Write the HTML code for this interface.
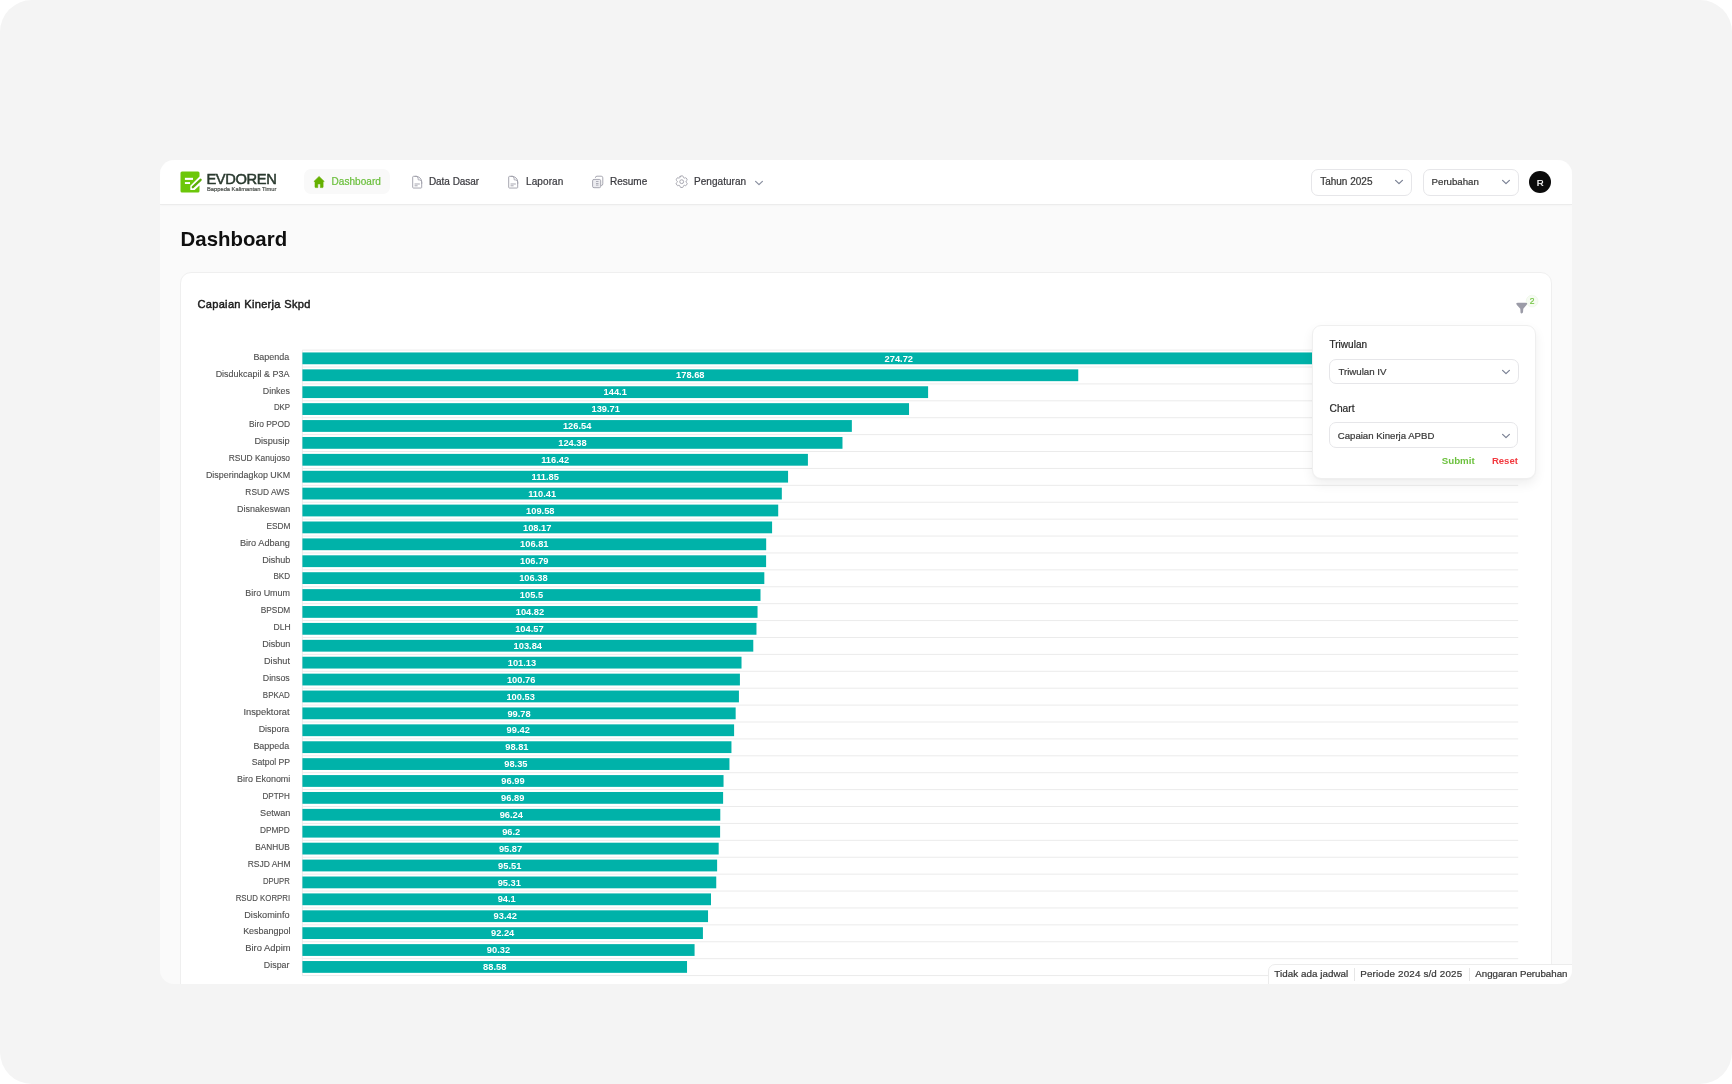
<!DOCTYPE html>
<html><head><meta charset="utf-8"><style>
html,body{margin:0;padding:0;width:1732px;height:1084px;overflow:hidden;background:#fff;font-family:"Liberation Sans", sans-serif;}
.abs{position:absolute;}
.t{position:absolute;white-space:nowrap;line-height:normal;}
.m{-webkit-text-stroke:0.22px currentColor;}
.l{-webkit-text-stroke:0.12px currentColor;}
.s{-webkit-text-stroke:0.45px currentColor;}
#inner{will-change:transform;}
.sel{position:absolute;box-sizing:border-box;border:1px solid #e6e6e9;border-radius:7px;background:#fff;}
#outer{position:absolute;left:0;top:0;width:1732px;height:1084px;background:#f4f4f4;border-radius:32px;}
#win{position:absolute;left:160px;top:160px;width:1412px;height:824px;background:#fafafa;border-radius:14px;overflow:hidden;}
#inner{position:absolute;left:-160px;top:-160px;width:1732px;height:1084px;}
</style></head><body>
<div id="outer"></div>
<div id="win"><div id="inner">
<div class="abs" style="left:160px;top:160px;width:1412px;height:44px;background:#fff;border-bottom:1px solid #ececec;box-shadow:0 1px 2px rgba(0,0,0,0.025)"></div>
<div class="abs" style="left:304px;top:169.3px;width:86px;height:25px;border-radius:7px;background:#f9f9f9"></div>
<svg class="abs" style="left:0;top:0" width="1732" height="300" viewBox="0 0 1732 300">
<path d="M180.5 172.9 Q180.5 171.4 182 171.4 L198 171.4 Q199.5 171.4 199.5 172.9 L199.5 176.6 L190.3 185.7 L190.3 190.1 L194.6 190.1 L199.5 185.4 L199.5 190.9 Q199.5 192.4 198 192.4 L182 192.4 Q180.5 192.4 180.5 190.9 Z" fill="#6cc70a"/>
<rect x="184.9" y="177.8" width="8.1" height="2.1" fill="#fff"/>
<rect x="184.9" y="182.1" width="5.1" height="1.9" fill="#fff"/>
<path d="M192.8 187.2 L200.6 179.8" stroke="#5aae06" stroke-width="2.3" stroke-linecap="round"/>
<path d="M313.9 181.5 L319.07 176.4 L324.25 181.5 L323.1 181.5 L323.1 187.0 Q323.1 187.6 322.5 187.6 L320.35 187.6 L320.35 183.9 L317.8 183.9 L317.8 187.6 L315.6 187.6 Q315.0 187.6 315.0 187.0 L315.0 181.5 Z" fill="#64b000" stroke="#64b000" stroke-width="0.6" stroke-linejoin="round"/>
</svg>
<div class="t " style="left:206.40px;top:171.30px;font-size:14.7px;color:#2a3a2f;font-weight:400;letter-spacing:-0.35px;-webkit-text-stroke:0.5px currentColor;">EVDOREN</div>
<div class="t " style="left:207.00px;top:185.70px;font-size:5.75px;color:#4a4f4b;font-weight:400;-webkit-text-stroke:0.2px currentColor;">Bappeda Kalimantan Timur</div>
<div class="t m" style="left:331.50px;top:175.95px;font-size:10px;color:#6abf3b;font-weight:400;letter-spacing:0.06px">Dashboard</div>
<svg class="abs" style="left:409.90px;top:174.6px" width="14.4" height="14.4" viewBox="0 0 24 24"><path fill="none" stroke="#a3a3ad" stroke-width="1.6" stroke-linecap="round" stroke-linejoin="round" d="M19.5 14.25v-2.625a3.375 3.375 0 0 0-3.375-3.375h-1.5A1.125 1.125 0 0 1 13.5 7.125v-1.5a3.375 3.375 0 0 0-3.375-3.375H8.25m0 12.75h7.5m-7.5 3H12M10.5 2.25H5.625c-.621 0-1.125.504-1.125 1.125v17.250c0 .621.504 1.125 1.125 1.125h12.75c.621 0 1.125-.504 1.125-1.125V11.25a9 9 0 0 0-9-9Z"/></svg>
<div class="t m" style="left:428.90px;top:175.95px;font-size:10px;color:#3b3b40;font-weight:400;letter-spacing:-0.03px">Data Dasar</div>
<svg class="abs" style="left:505.90px;top:174.6px" width="14.4" height="14.4" viewBox="0 0 24 24"><path fill="none" stroke="#a3a3ad" stroke-width="1.6" stroke-linecap="round" stroke-linejoin="round" d="M19.5 14.25v-2.625a3.375 3.375 0 0 0-3.375-3.375h-1.5A1.125 1.125 0 0 1 13.5 7.125v-1.5a3.375 3.375 0 0 0-3.375-3.375H8.25m0 12.75h7.5m-7.5 3H12M10.5 2.25H5.625c-.621 0-1.125.504-1.125 1.125v17.250c0 .621.504 1.125 1.125 1.125h12.75c.621 0 1.125-.504 1.125-1.125V11.25a9 9 0 0 0-9-9Z"/></svg>
<div class="t m" style="left:526.00px;top:175.95px;font-size:10px;color:#3b3b40;font-weight:400;letter-spacing:0.1px">Laporan</div>
<svg class="abs" style="left:590px;top:174px" width="16" height="16" viewBox="0 0 16 16"><path d="M5.4 3.8 Q5.4 2.2 7 2.2 L11.2 2.2 Q12.8 2.2 12.8 3.8 L12.8 9.9 Q12.8 11.5 11.2 11.5 L10.7 11.5" fill="none" stroke="#a7a7b1" stroke-width="1"/><rect x="2.6" y="5.4" width="8.1" height="8.3" rx="1.4" fill="#ececf0" stroke="#a7a7b1" stroke-width="1"/><path d="M6 7.5 H8.5 M6 9.5 H8.5 M6 11.1 H8.5" stroke="#a7a7b1" stroke-width="0.9"/></svg>
<div class="t m" style="left:610.00px;top:175.95px;font-size:10px;color:#3b3b40;font-weight:400;">Resume</div>
<svg class="abs" style="left:674.3px;top:174.3px" width="15.4" height="15.4" viewBox="0 0 24 24"><path fill="none" stroke="#a3a3ad" stroke-width="1.5" stroke-linecap="round" stroke-linejoin="round" d="M9.594 3.94c.09-.542.56-.94 1.11-.94h2.593c.55 0 1.02.398 1.11.94l.213 1.281c.063.374.313.686.645.87.074.04.147.083.22.127.325.196.72.257 1.075.124l1.217-.456a1.125 1.125 0 0 1 1.37.49l1.296 2.247a1.125 1.125 0 0 1-.26 1.431l-1.003.827c-.293.241-.438.613-.43.992a7.723 7.723 0 0 1 0 .255c-.008.378.137.75.43.991l1.004.827c.424.35.534.955.26 1.43l-1.298 2.247a1.125 1.125 0 0 1-1.369.491l-1.217-.456c-.355-.133-.75-.072-1.076.124a6.47 6.47 0 0 1-.22.128c-.331.183-.581.495-.644.869l-.213 1.281c-.09.543-.56.94-1.110.94h-2.594c-.55 0-1.019-.398-1.11-.94l-.213-1.281c-.062-.374-.312-.686-.644-.87a6.52 6.52 0 0 1-.22-.127c-.325-.196-.72-.257-1.076-.124l-1.217.456a1.125 1.125 0 0 1-1.369-.49l-1.297-2.247a1.125 1.125 0 0 1 .26-1.431l1.004-.827c.292-.24.437-.613.43-.991a6.932 6.932 0 0 1 0-.255c.007-.38-.138-.751-.43-.992l-1.004-.827a1.125 1.125 0 0 1-.26-1.430l1.297-2.247a1.125 1.125 0 0 1 1.37-.491l1.216.456c.356.133.751.072 1.076-.124.072-.044.146-.086.22-.128.332-.183.582-.495.644-.869l.214-1.28Z"/><path fill="none" stroke="#a3a3ad" stroke-width="1.5" d="M15 12a3 3 0 1 1-6 0 3 3 0 0 1 6 0Z"/></svg>
<div class="t m" style="left:694.00px;top:175.95px;font-size:10px;color:#3b3b40;font-weight:400;letter-spacing:0.05px">Pengaturan</div>
<svg class="abs" style="left:753.8px;top:179.5px" width="10" height="6" viewBox="0 0 10 6"><path d="M1.6 1.4 L5 4.6 L8.4 1.4" fill="none" stroke="#8a90a0" stroke-width="1.25" stroke-linecap="round" stroke-linejoin="round"/></svg>
<div class="sel" style="left:1311.4px;top:169.3px;width:101px;height:26.4px"></div>
<div class="t m" style="left:1320.20px;top:175.95px;font-size:10.0px;color:#383838;font-weight:400;">Tahun 2025</div>
<svg class="abs" style="left:1394.4px;top:179.2px" width="10" height="6" viewBox="0 0 10 6"><path d="M1.6 1.4 L5 4.6 L8.4 1.4" fill="none" stroke="#7a8194" stroke-width="1.25" stroke-linecap="round" stroke-linejoin="round"/></svg>
<div class="sel" style="left:1422.6px;top:169.2px;width:96px;height:26.4px"></div>
<div class="t m" style="left:1431.60px;top:176.25px;font-size:9.67px;color:#383838;font-weight:400;">Perubahan</div>
<svg class="abs" style="left:1500.5px;top:179.2px" width="10" height="6" viewBox="0 0 10 6"><path d="M1.6 1.4 L5 4.6 L8.4 1.4" fill="none" stroke="#7a8194" stroke-width="1.25" stroke-linecap="round" stroke-linejoin="round"/></svg>
<div class="abs" style="left:1529.1px;top:170.9px;width:22px;height:22px;border-radius:50%;background:#0b0b0b"></div>
<div class="t m" style="left:1040.30px;width:1000px;text-align:center;top:177.12px;font-size:9.7px;color:#fff;font-weight:400;">R</div>
<div class="t " style="left:180.60px;top:227.74px;font-size:20.4px;color:#0f0f0f;font-weight:700;">Dashboard</div>
<div class="abs" style="left:180px;top:272px;width:1372px;height:800px;background:#fff;border:1px solid #efefef;border-radius:11px;box-sizing:border-box"></div>
<div class="t s" style="left:197.40px;top:297.55px;font-size:11.1px;color:#1c1c1c;font-weight:400;letter-spacing:0.3px">Capaian Kinerja Skpd</div>
<svg class="abs" width="1732" height="1084" viewBox="0 0 1732 1084" style="left:0;top:0"><rect x="302.40" y="349.60" width="1215.80" height="1" fill="#ebebeb"/><rect x="302.40" y="366.50" width="1215.80" height="1" fill="#ebebeb"/><rect x="302.40" y="383.41" width="1215.80" height="1" fill="#ebebeb"/><rect x="302.40" y="400.32" width="1215.80" height="1" fill="#ebebeb"/><rect x="302.40" y="417.22" width="1215.80" height="1" fill="#ebebeb"/><rect x="302.40" y="434.12" width="1215.80" height="1" fill="#ebebeb"/><rect x="302.40" y="451.03" width="1215.80" height="1" fill="#ebebeb"/><rect x="302.40" y="467.94" width="1215.80" height="1" fill="#ebebeb"/><rect x="302.40" y="484.84" width="1215.80" height="1" fill="#ebebeb"/><rect x="302.40" y="501.75" width="1215.80" height="1" fill="#ebebeb"/><rect x="302.40" y="518.65" width="1215.80" height="1" fill="#ebebeb"/><rect x="302.40" y="535.56" width="1215.80" height="1" fill="#ebebeb"/><rect x="302.40" y="552.46" width="1215.80" height="1" fill="#ebebeb"/><rect x="302.40" y="569.37" width="1215.80" height="1" fill="#ebebeb"/><rect x="302.40" y="586.27" width="1215.80" height="1" fill="#ebebeb"/><rect x="302.40" y="603.18" width="1215.80" height="1" fill="#ebebeb"/><rect x="302.40" y="620.08" width="1215.80" height="1" fill="#ebebeb"/><rect x="302.40" y="636.99" width="1215.80" height="1" fill="#ebebeb"/><rect x="302.40" y="653.89" width="1215.80" height="1" fill="#ebebeb"/><rect x="302.40" y="670.80" width="1215.80" height="1" fill="#ebebeb"/><rect x="302.40" y="687.70" width="1215.80" height="1" fill="#ebebeb"/><rect x="302.40" y="704.61" width="1215.80" height="1" fill="#ebebeb"/><rect x="302.40" y="721.51" width="1215.80" height="1" fill="#ebebeb"/><rect x="302.40" y="738.42" width="1215.80" height="1" fill="#ebebeb"/><rect x="302.40" y="755.32" width="1215.80" height="1" fill="#ebebeb"/><rect x="302.40" y="772.23" width="1215.80" height="1" fill="#ebebeb"/><rect x="302.40" y="789.13" width="1215.80" height="1" fill="#ebebeb"/><rect x="302.40" y="806.04" width="1215.80" height="1" fill="#ebebeb"/><rect x="302.40" y="822.94" width="1215.80" height="1" fill="#ebebeb"/><rect x="302.40" y="839.85" width="1215.80" height="1" fill="#ebebeb"/><rect x="302.40" y="856.75" width="1215.80" height="1" fill="#ebebeb"/><rect x="302.40" y="873.66" width="1215.80" height="1" fill="#ebebeb"/><rect x="302.40" y="890.56" width="1215.80" height="1" fill="#ebebeb"/><rect x="302.40" y="907.47" width="1215.80" height="1" fill="#ebebeb"/><rect x="302.40" y="924.37" width="1215.80" height="1" fill="#ebebeb"/><rect x="302.40" y="941.28" width="1215.80" height="1" fill="#ebebeb"/><rect x="302.40" y="958.18" width="1215.80" height="1" fill="#ebebeb"/><rect x="302.40" y="975.09" width="1215.80" height="1" fill="#ebebeb"/><rect x="301.90" y="350.10" width="1" height="625.49" fill="#ebebeb"/><rect x="302.40" y="352.45" width="1192.87" height="11.80" fill="#00b2a9"/><rect x="302.40" y="369.36" width="775.85" height="11.80" fill="#00b2a9"/><rect x="302.40" y="386.26" width="625.70" height="11.80" fill="#00b2a9"/><rect x="302.40" y="403.17" width="606.64" height="11.80" fill="#00b2a9"/><rect x="302.40" y="420.07" width="549.45" height="11.80" fill="#00b2a9"/><rect x="302.40" y="436.98" width="540.08" height="11.80" fill="#00b2a9"/><rect x="302.40" y="453.88" width="505.51" height="11.80" fill="#00b2a9"/><rect x="302.40" y="470.79" width="485.67" height="11.80" fill="#00b2a9"/><rect x="302.40" y="487.69" width="479.42" height="11.80" fill="#00b2a9"/><rect x="302.40" y="504.60" width="475.81" height="11.80" fill="#00b2a9"/><rect x="302.40" y="521.50" width="469.69" height="11.80" fill="#00b2a9"/><rect x="302.40" y="538.41" width="463.78" height="11.80" fill="#00b2a9"/><rect x="302.40" y="555.31" width="463.70" height="11.80" fill="#00b2a9"/><rect x="302.40" y="572.22" width="461.92" height="11.80" fill="#00b2a9"/><rect x="302.40" y="589.12" width="458.10" height="11.80" fill="#00b2a9"/><rect x="302.40" y="606.03" width="455.14" height="11.80" fill="#00b2a9"/><rect x="302.40" y="622.93" width="454.06" height="11.80" fill="#00b2a9"/><rect x="302.40" y="639.84" width="450.89" height="11.80" fill="#00b2a9"/><rect x="302.40" y="656.74" width="439.12" height="11.80" fill="#00b2a9"/><rect x="302.40" y="673.65" width="437.51" height="11.80" fill="#00b2a9"/><rect x="302.40" y="690.55" width="436.52" height="11.80" fill="#00b2a9"/><rect x="302.40" y="707.46" width="433.26" height="11.80" fill="#00b2a9"/><rect x="302.40" y="724.36" width="431.70" height="11.80" fill="#00b2a9"/><rect x="302.40" y="741.27" width="429.05" height="11.80" fill="#00b2a9"/><rect x="302.40" y="758.17" width="427.05" height="11.80" fill="#00b2a9"/><rect x="302.40" y="775.08" width="421.14" height="11.80" fill="#00b2a9"/><rect x="302.40" y="791.98" width="420.71" height="11.80" fill="#00b2a9"/><rect x="302.40" y="808.89" width="417.89" height="11.80" fill="#00b2a9"/><rect x="302.40" y="825.79" width="417.71" height="11.80" fill="#00b2a9"/><rect x="302.40" y="842.70" width="416.28" height="11.80" fill="#00b2a9"/><rect x="302.40" y="859.60" width="414.72" height="11.80" fill="#00b2a9"/><rect x="302.40" y="876.51" width="413.85" height="11.80" fill="#00b2a9"/><rect x="302.40" y="893.41" width="408.60" height="11.80" fill="#00b2a9"/><rect x="302.40" y="910.32" width="405.64" height="11.80" fill="#00b2a9"/><rect x="302.40" y="927.22" width="400.52" height="11.80" fill="#00b2a9"/><rect x="302.40" y="944.13" width="392.18" height="11.80" fill="#00b2a9"/><rect x="302.40" y="961.03" width="384.63" height="11.80" fill="#00b2a9"/></svg>
<div class="t l" style="right:1442.47px;top:351.69px;font-size:8.8px;color:#4e4e4e;font-weight:400;transform:scaleX(1.0174);transform-origin:100% 50%;">Bapenda</div>
<div class="t " style="left:398.84px;width:1000px;text-align:center;top:353.53px;font-size:9.3px;color:#fff;font-weight:700;">274.72</div>
<div class="t l" style="right:1442.58px;top:368.59px;font-size:8.8px;color:#4e4e4e;font-weight:400;transform:scaleX(1.0188);transform-origin:100% 50%;">Disdukcapil &amp; P3A</div>
<div class="t " style="left:190.33px;width:1000px;text-align:center;top:370.44px;font-size:9.3px;color:#fff;font-weight:700;">178.68</div>
<div class="t l" style="right:1442.31px;top:385.50px;font-size:8.8px;color:#4e4e4e;font-weight:400;transform:scaleX(1.0077);transform-origin:100% 50%;">Dinkes</div>
<div class="t " style="left:115.25px;width:1000px;text-align:center;top:387.34px;font-size:9.3px;color:#fff;font-weight:700;">144.1</div>
<div class="t l" style="right:1442.14px;top:402.40px;font-size:8.8px;color:#4e4e4e;font-weight:400;transform:scaleX(0.8941);transform-origin:100% 50%;">DKP</div>
<div class="t " style="left:105.72px;width:1000px;text-align:center;top:404.25px;font-size:9.3px;color:#fff;font-weight:700;">139.71</div>
<div class="t l" style="right:1442.18px;top:419.31px;font-size:8.8px;color:#4e4e4e;font-weight:400;transform:scaleX(0.9548);transform-origin:100% 50%;">Biro PPOD</div>
<div class="t " style="left:77.13px;width:1000px;text-align:center;top:421.15px;font-size:9.3px;color:#fff;font-weight:700;">126.54</div>
<div class="t l" style="right:1442.19px;top:436.21px;font-size:8.8px;color:#4e4e4e;font-weight:400;transform:scaleX(1.0473);transform-origin:100% 50%;">Dispusip</div>
<div class="t " style="left:72.44px;width:1000px;text-align:center;top:438.06px;font-size:9.3px;color:#fff;font-weight:700;">124.38</div>
<div class="t l" style="right:1442.15px;top:453.12px;font-size:8.8px;color:#4e4e4e;font-weight:400;transform:scaleX(0.9571);transform-origin:100% 50%;">RSUD Kanujoso</div>
<div class="t " style="left:55.16px;width:1000px;text-align:center;top:454.96px;font-size:9.3px;color:#fff;font-weight:700;">116.42</div>
<div class="t l" style="right:1441.82px;top:470.02px;font-size:8.8px;color:#4e4e4e;font-weight:400;transform:scaleX(1.0128);transform-origin:100% 50%;">Disperindagkop UKM</div>
<div class="t " style="left:45.23px;width:1000px;text-align:center;top:471.87px;font-size:9.3px;color:#fff;font-weight:700;">111.85</div>
<div class="t l" style="right:1442.11px;top:486.93px;font-size:8.8px;color:#4e4e4e;font-weight:400;transform:scaleX(0.9495);transform-origin:100% 50%;">RSUD AWS</div>
<div class="t " style="left:42.11px;width:1000px;text-align:center;top:488.77px;font-size:9.3px;color:#fff;font-weight:700;">110.41</div>
<div class="t l" style="right:1441.86px;top:503.83px;font-size:8.8px;color:#4e4e4e;font-weight:400;transform:scaleX(1.0176);transform-origin:100% 50%;">Disnakeswan</div>
<div class="t " style="left:40.31px;width:1000px;text-align:center;top:505.68px;font-size:9.3px;color:#fff;font-weight:700;">109.58</div>
<div class="t l" style="right:1441.81px;top:520.74px;font-size:8.8px;color:#4e4e4e;font-weight:400;transform:scaleX(0.9458);transform-origin:100% 50%;">ESDM</div>
<div class="t " style="left:37.24px;width:1000px;text-align:center;top:522.58px;font-size:9.3px;color:#fff;font-weight:700;">108.17</div>
<div class="t l" style="right:1441.99px;top:537.64px;font-size:8.8px;color:#4e4e4e;font-weight:400;transform:scaleX(1.0439);transform-origin:100% 50%;">Biro Adbang</div>
<div class="t " style="left:34.29px;width:1000px;text-align:center;top:539.49px;font-size:9.3px;color:#fff;font-weight:700;">106.81</div>
<div class="t l" style="right:1442.05px;top:554.55px;font-size:8.8px;color:#4e4e4e;font-weight:400;transform:scaleX(1.0286);transform-origin:100% 50%;">Dishub</div>
<div class="t " style="left:34.25px;width:1000px;text-align:center;top:556.39px;font-size:9.3px;color:#fff;font-weight:700;">106.79</div>
<div class="t l" style="right:1442.13px;top:571.45px;font-size:8.8px;color:#4e4e4e;font-weight:400;transform:scaleX(0.9176);transform-origin:100% 50%;">BKD</div>
<div class="t " style="left:33.36px;width:1000px;text-align:center;top:573.30px;font-size:9.3px;color:#fff;font-weight:700;">106.38</div>
<div class="t l" style="right:1441.94px;top:588.36px;font-size:8.8px;color:#4e4e4e;font-weight:400;transform:scaleX(1.0175);transform-origin:100% 50%;">Biro Umum</div>
<div class="t " style="left:31.45px;width:1000px;text-align:center;top:590.20px;font-size:9.3px;color:#fff;font-weight:700;">105.5</div>
<div class="t l" style="right:1441.93px;top:605.26px;font-size:8.8px;color:#4e4e4e;font-weight:400;transform:scaleX(0.9433);transform-origin:100% 50%;">BPSDM</div>
<div class="t " style="left:29.97px;width:1000px;text-align:center;top:607.11px;font-size:9.3px;color:#fff;font-weight:700;">104.82</div>
<div class="t l" style="right:1441.86px;top:622.17px;font-size:8.8px;color:#4e4e4e;font-weight:400;transform:scaleX(0.9723);transform-origin:100% 50%;">DLH</div>
<div class="t " style="left:29.43px;width:1000px;text-align:center;top:624.01px;font-size:9.3px;color:#fff;font-weight:700;">104.57</div>
<div class="t l" style="right:1442.05px;top:639.07px;font-size:8.8px;color:#4e4e4e;font-weight:400;transform:scaleX(1.0286);transform-origin:100% 50%;">Disbun</div>
<div class="t " style="left:27.84px;width:1000px;text-align:center;top:640.92px;font-size:9.3px;color:#fff;font-weight:700;">103.84</div>
<div class="t l" style="right:1442.51px;top:655.98px;font-size:8.8px;color:#4e4e4e;font-weight:400;transform:scaleX(1.0392);transform-origin:100% 50%;">Dishut</div>
<div class="t " style="left:21.96px;width:1000px;text-align:center;top:657.82px;font-size:9.3px;color:#fff;font-weight:700;">101.13</div>
<div class="t l" style="right:1442.31px;top:672.88px;font-size:8.8px;color:#4e4e4e;font-weight:400;transform:scaleX(1.0);transform-origin:100% 50%;">Dinsos</div>
<div class="t " style="left:21.16px;width:1000px;text-align:center;top:674.73px;font-size:9.3px;color:#fff;font-weight:700;">100.76</div>
<div class="t l" style="right:1442.15px;top:689.79px;font-size:8.8px;color:#4e4e4e;font-weight:400;transform:scaleX(0.9043);transform-origin:100% 50%;">BPKAD</div>
<div class="t " style="left:20.66px;width:1000px;text-align:center;top:691.63px;font-size:9.3px;color:#fff;font-weight:700;">100.53</div>
<div class="t l" style="right:1442.42px;top:706.69px;font-size:8.8px;color:#4e4e4e;font-weight:400;transform:scaleX(1.0596);transform-origin:100% 50%;">Inspektorat</div>
<div class="t " style="left:19.03px;width:1000px;text-align:center;top:708.54px;font-size:9.3px;color:#fff;font-weight:700;">99.78</div>
<div class="t l" style="right:1442.64px;top:723.60px;font-size:8.8px;color:#4e4e4e;font-weight:400;transform:scaleX(1.0118);transform-origin:100% 50%;">Dispora</div>
<div class="t " style="left:18.25px;width:1000px;text-align:center;top:725.44px;font-size:9.3px;color:#fff;font-weight:700;">99.42</div>
<div class="t l" style="right:1442.47px;top:740.50px;font-size:8.8px;color:#4e4e4e;font-weight:400;transform:scaleX(1.0174);transform-origin:100% 50%;">Bappeda</div>
<div class="t " style="left:16.92px;width:1000px;text-align:center;top:742.35px;font-size:9.3px;color:#fff;font-weight:700;">98.81</div>
<div class="t l" style="right:1442.08px;top:757.41px;font-size:8.8px;color:#4e4e4e;font-weight:400;transform:scaleX(0.983);transform-origin:100% 50%;">Satpol PP</div>
<div class="t " style="left:15.92px;width:1000px;text-align:center;top:759.25px;font-size:9.3px;color:#fff;font-weight:700;">98.35</div>
<div class="t l" style="right:1441.86px;top:774.31px;font-size:8.8px;color:#4e4e4e;font-weight:400;transform:scaleX(1.0176);transform-origin:100% 50%;">Biro Ekonomi</div>
<div class="t " style="left:12.97px;width:1000px;text-align:center;top:776.16px;font-size:9.3px;color:#fff;font-weight:700;">96.99</div>
<div class="t l" style="right:1441.92px;top:791.22px;font-size:8.8px;color:#4e4e4e;font-weight:400;transform:scaleX(0.9193);transform-origin:100% 50%;">DPTPH</div>
<div class="t " style="left:12.76px;width:1000px;text-align:center;top:793.06px;font-size:9.3px;color:#fff;font-weight:700;">96.89</div>
<div class="t l" style="right:1441.84px;top:808.12px;font-size:8.8px;color:#4e4e4e;font-weight:400;transform:scaleX(1.0301);transform-origin:100% 50%;">Setwan</div>
<div class="t " style="left:11.34px;width:1000px;text-align:center;top:809.97px;font-size:9.3px;color:#fff;font-weight:700;">96.24</div>
<div class="t l" style="right:1442.19px;top:825.03px;font-size:8.8px;color:#4e4e4e;font-weight:400;transform:scaleX(0.9398);transform-origin:100% 50%;">DPMPD</div>
<div class="t " style="left:11.26px;width:1000px;text-align:center;top:826.87px;font-size:9.3px;color:#fff;font-weight:700;">96.2</div>
<div class="t l" style="right:1442.05px;top:841.93px;font-size:8.8px;color:#4e4e4e;font-weight:400;transform:scaleX(0.938);transform-origin:100% 50%;">BANHUB</div>
<div class="t " style="left:10.54px;width:1000px;text-align:center;top:843.78px;font-size:9.3px;color:#fff;font-weight:700;">95.87</div>
<div class="t l" style="right:1441.74px;top:858.84px;font-size:8.8px;color:#4e4e4e;font-weight:400;transform:scaleX(0.9628);transform-origin:100% 50%;">RSJD AHM</div>
<div class="t " style="left:9.76px;width:1000px;text-align:center;top:860.68px;font-size:9.3px;color:#fff;font-weight:700;">95.51</div>
<div class="t l" style="right:1442.19px;top:875.74px;font-size:8.8px;color:#4e4e4e;font-weight:400;transform:scaleX(0.8739);transform-origin:100% 50%;">DPUPR</div>
<div class="t " style="left:9.32px;width:1000px;text-align:center;top:877.59px;font-size:9.3px;color:#fff;font-weight:700;">95.31</div>
<div class="t l" style="right:1441.68px;top:892.65px;font-size:8.8px;color:#4e4e4e;font-weight:400;transform:scaleX(0.8908);transform-origin:100% 50%;">RSUD KORPRI</div>
<div class="t " style="left:6.70px;width:1000px;text-align:center;top:894.49px;font-size:9.3px;color:#fff;font-weight:700;">94.1</div>
<div class="t l" style="right:1442.17px;top:909.55px;font-size:8.8px;color:#4e4e4e;font-weight:400;transform:scaleX(1.04);transform-origin:100% 50%;">Diskominfo</div>
<div class="t " style="left:5.22px;width:1000px;text-align:center;top:911.40px;font-size:9.3px;color:#fff;font-weight:700;">93.42</div>
<div class="t l" style="right:1441.97px;top:926.46px;font-size:8.8px;color:#4e4e4e;font-weight:400;transform:scaleX(1.0188);transform-origin:100% 50%;">Kesbangpol</div>
<div class="t " style="left:2.66px;width:1000px;text-align:center;top:928.30px;font-size:9.3px;color:#fff;font-weight:700;">92.24</div>
<div class="t l" style="right:1441.87px;top:943.36px;font-size:8.8px;color:#4e4e4e;font-weight:400;transform:scaleX(1.0667);transform-origin:100% 50%;">Biro Adpim</div>
<div class="t " style="left:-1.51px;width:1000px;text-align:center;top:945.21px;font-size:9.3px;color:#fff;font-weight:700;">90.32</div>
<div class="t l" style="right:1442.53px;top:960.27px;font-size:8.8px;color:#4e4e4e;font-weight:400;transform:scaleX(1.0061);transform-origin:100% 50%;">Dispar</div>
<div class="t " style="left:-5.29px;width:1000px;text-align:center;top:962.11px;font-size:9.3px;color:#fff;font-weight:700;">88.58</div>
<div class="abs" style="left:1312px;top:325px;width:223.5px;height:153.5px;border-radius:9px;background:#fff;border:1px solid #efefef;box-sizing:border-box;box-shadow:0 5px 12px rgba(0,0,0,0.065), 0 1px 2px rgba(0,0,0,0.03)"></div>
<div class="t m" style="left:1329.50px;top:339.35px;font-size:10.0px;color:#2a2a2a;font-weight:400;letter-spacing:0.02px">Triwulan</div>
<div class="sel" style="left:1329.2px;top:358.7px;width:189.4px;height:25.8px"></div>
<div class="t m" style="left:1338.40px;top:366.22px;font-size:9.7px;color:#3a3a3a;font-weight:400;">Triwulan IV</div>
<svg class="abs" style="left:1500.5px;top:368.9px" width="10" height="6" viewBox="0 0 10 6"><path d="M1.6 1.4 L5 4.6 L8.4 1.4" fill="none" stroke="#7a8194" stroke-width="1.25" stroke-linecap="round" stroke-linejoin="round"/></svg>
<div class="t m" style="left:1329.50px;top:402.67px;font-size:10.2px;color:#2a2a2a;font-weight:400;letter-spacing:0.05px">Chart</div>
<div class="sel" style="left:1329.1px;top:422.3px;width:189.4px;height:26px"></div>
<div class="t m" style="left:1337.80px;top:430.11px;font-size:9.6px;color:#3a3a3a;font-weight:400;">Capaian Kinerja APBD</div>
<svg class="abs" style="left:1500.5px;top:432.6px" width="10" height="6" viewBox="0 0 10 6"><path d="M1.6 1.4 L5 4.6 L8.4 1.4" fill="none" stroke="#7a8194" stroke-width="1.25" stroke-linecap="round" stroke-linejoin="round"/></svg>
<div class="t " style="left:1441.70px;top:454.79px;font-size:9.74px;color:#6cc13e;font-weight:700;">Submit</div>
<div class="t " style="left:1491.90px;top:454.96px;font-size:9.55px;color:#f2393f;font-weight:700;">Reset</div>
<svg class="abs" style="left:0;top:0" width="1732" height="400" viewBox="0 0 1732 400">
<circle cx="1532.1" cy="301.1" r="5.9" fill="#f6fbf2" stroke="#eef7e8" stroke-width="0.8"/>
<path d="M1516.9 305.0 Q1515.7 303.4 1516.6 303.0 Q1517 302.8 1518 302.8 L1525.4 302.8 Q1526.6 302.8 1527 303.1 Q1527.7 303.6 1526.5 305.0 L1523.3 308.7 L1523.0 312.2 Q1522.8 313.1 1521.5 313.4 Q1520.5 313.5 1520.5 312.6 L1520.3 308.7 Z" fill="#9b9ba7"/>
</svg>
<div class="t m" style="left:1032.00px;width:1000px;text-align:center;top:296.06px;font-size:8.5px;color:#74c545;font-weight:400;">2</div>
<div class="abs" style="left:1268.3px;top:964.2px;width:320px;height:30px;border-top-left-radius:7px;background:#fff;border:1px solid #ececec;box-sizing:border-box"></div>
<div class="t m" style="left:1274.30px;top:968.33px;font-size:9.8px;color:#383838;font-weight:400;letter-spacing:0.05px">Tidak ada jadwal</div>
<div class="abs" style="left:1353.8px;top:968px;width:1px;height:13px;background:#e6e6e6"></div>
<div class="t m" style="left:1360.20px;top:968.33px;font-size:9.8px;color:#383838;font-weight:400;letter-spacing:0.17px">Periode 2024 s/d 2025</div>
<div class="abs" style="left:1468.8px;top:968px;width:1px;height:13px;background:#e6e6e6"></div>
<div class="t m" style="left:1475.30px;top:968.42px;font-size:9.7px;color:#383838;font-weight:400;">Anggaran Perubahan</div>
</div></div>
</body></html>
